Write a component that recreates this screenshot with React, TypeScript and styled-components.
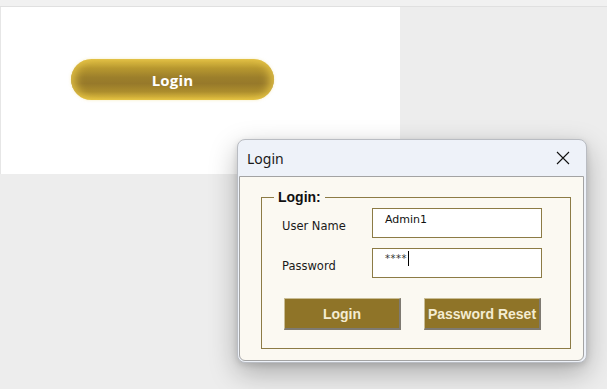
import React from "react";
import styled, { createGlobalStyle } from "styled-components";

const Global = createGlobalStyle`
  html, body { margin: 0; padding: 0; }
  body {
    background: #ededed;
    width: 607px;
    height: 389px;
    overflow: hidden;
    font-family: "Liberation Sans", Arial, sans-serif;
  }
`;

const Page = styled.div`
  position: relative;
  width: 607px;
  height: 389px;
  background: #ededed;
`;

const TopStrip = styled.div`
  height: 6px;
  background: #f1f1f1;
  border-bottom: 1px solid #e0e0e0;
`;

const Sheet = styled.div`
  width: 400px;
  height: 167px;
  background: #ffffff;
  border-left: 1px solid #e6e6e6;
  box-sizing: border-box;
  padding: 52px 0 0 70px;
`;

const PillButton = styled.button`
  width: 203px;
  height: 41px;
  border: none;
  border-radius: 21px;
  background: linear-gradient(
    to bottom,
    #e3c246 0%,
    #b8982f 22%,
    #9c7f2b 45%,
    #97792a 60%,
    #ad8e2d 80%,
    #e6c443 100%
  );
  box-shadow: inset 10px 0 10px -6px rgba(230, 195, 70, 0.9),
    inset -10px 0 10px -6px rgba(230, 195, 70, 0.9),
    0 0 3px rgba(240, 215, 120, 0.5);
  color: #ffffff;
  font-family: "Open Sans", "Noto Sans", sans-serif;
  font-weight: 700;
  font-size: 15px;
  letter-spacing: 0.2px;
  cursor: pointer;
`;

const Dialog = styled.div`
  position: absolute;
  left: 237px;
  top: 139px;
  width: 350px;
  height: 224px;
  box-sizing: border-box;
  background: #eef2f9;
  border: 1px solid #b9bcc2;
  border-radius: 8px;
  box-shadow: 0 10px 28px rgba(0, 0, 0, 0.28), 0 2px 6px rgba(0, 0, 0, 0.12);
  display: flex;
  flex-direction: column;
  padding: 0 2px 1px 1px;
`;

const TitleBar = styled.div`
  height: 36px;
  display: flex;
  align-items: center;
  justify-content: space-between;
  padding: 0 14px 0 8px;
  font-family: "Noto Sans", "Open Sans", sans-serif;
  font-size: 14px;
  color: #1a1a1a;
`;

const CloseIcon = styled.svg`
  width: 14px;
  height: 14px;
  display: block;
`;

const Body = styled.div`
  flex: 1;
  background: #fbf9f2;
  border: 1px solid #a3a3a3;
  border-radius: 0 0 6px 6px;
  padding: 12px 14px 11px 21px;
  display: flex;
`;

const Group = styled.fieldset`
  flex: 1;
  margin: 0;
  border: 1px solid #8c7b45;
  padding: 0;
  display: flex;
  flex-direction: column;
`;

const Legend = styled.legend`
  margin-left: 12px;
  padding: 0 4px;
  font-family: "Liberation Sans", Arial, sans-serif;
  font-weight: 700;
  font-size: 14px;
  line-height: 16px;
  color: #111;
`;

const GroupContent = styled.div`
  padding: 3px 28px 0 20px;
  display: flex;
  flex-direction: column;
`;

const FieldRow = styled.div`
  display: flex;
  align-items: flex-start;
  margin-bottom: 10px;
`;

const Label = styled.div`
  width: 90px;
  padding-top: 11px;
  font-family: "DejaVu Sans", Tahoma, sans-serif;
  font-size: 11.5px;
  color: #1a1a1a;
`;

const Field = styled.div`
  width: 170px;
  height: 30px;
  box-sizing: border-box;
  background: #ffffff;
  border: 1px solid #8c7b45;
  padding: 4px 0 0 12px;
  font-family: "DejaVu Sans", Tahoma, sans-serif;
  font-size: 11px;
  color: #111;
  display: flex;
  align-items: flex-start;
`;

const Caret = styled.span`
  display: inline-block;
  width: 1px;
  height: 15px;
  background: #000;
  margin-left: 1px;
  margin-top: -2px;
`;

const Masked = styled.span`
  font-size: 10px;
  letter-spacing: 0.5px;
  color: #333;
`;

const ButtonRow = styled.div`
  display: flex;
  gap: 23px;
  margin-top: 10px;
  padding-left: 2px;
`;

const FormButton = styled.button`
  width: 117px;
  height: 32px;
  box-sizing: border-box;
  background: #8f7428;
  border-style: solid;
  border-width: 1px 2px 2px 1px;
  border-color: #c9bd95 #7e7a72 #7e7a72 #c9bd95;
  color: #f4ecd2;
  font-family: "Liberation Sans", Arial, sans-serif;
  font-weight: 700;
  font-size: 14px;
  padding: 0;
  cursor: pointer;
`;

export default function App() {
  return (
    <>
      <Global />
      <Page>
        <TopStrip />
        <Sheet>
          <PillButton>Login</PillButton>
        </Sheet>
        <Dialog>
          <TitleBar>
            <span>Login</span>
            <CloseIcon viewBox="0 0 14 14">
              <path d="M1 1 L13 13 M13 1 L1 13" stroke="#111" strokeWidth="1.1" fill="none" />
            </CloseIcon>
          </TitleBar>
          <Body>
            <Group>
              <Legend>Login:</Legend>
              <GroupContent>
                <FieldRow>
                  <Label>User Name</Label>
                  <Field>Admin1</Field>
                </FieldRow>
                <FieldRow>
                  <Label>Password</Label>
                  <Field>
                    <Masked>****</Masked>
                    <Caret />
                  </Field>
                </FieldRow>
                <ButtonRow>
                  <FormButton>Login</FormButton>
                  <FormButton>Password Reset</FormButton>
                </ButtonRow>
              </GroupContent>
            </Group>
          </Body>
        </Dialog>
      </Page>
    </>
  );
}
